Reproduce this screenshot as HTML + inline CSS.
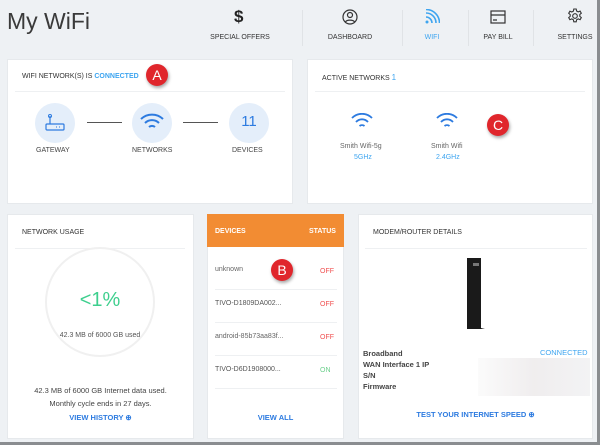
<!DOCTYPE html>
<html><head><style>
*{margin:0;padding:0;box-sizing:border-box}
body{width:600px;height:445px;background:#eef1f4;font-family:"Liberation Sans",sans-serif;position:relative;overflow:hidden;color:#444}
.a{position:absolute}
.card{position:absolute;background:#fff;border:1px solid #e6e9ec}
.t{position:absolute;font-size:7px;white-space:nowrap}
.nav{position:absolute;top:34px;font-size:7px;color:#333;transform:translateX(-50%);white-space:nowrap}
.sep{position:absolute;top:10px;width:1px;height:36px;background:#e0e3e6}
.badge{position:absolute;width:22px;height:22px;border-radius:50%;background:#e0262c;color:#fff;font-size:14px;text-align:center;line-height:22px;box-shadow:1px 2px 3px rgba(0,0,0,.35)}
.circ{position:absolute;width:40px;height:40px;border-radius:50%;background:#e4eefa}
.hr{position:absolute;height:1px;background:#eef0f2}
.blue{color:#2d7be0}
</style></head><body>
<div class="a" style="left:7px;top:8px;font-size:23px;color:#3a3a3a">My WiFi</div>
<div class="a" style="left:234px;top:7px;font-size:17px;font-weight:bold;color:#222">$</div>
<div class="nav" style="left:240px">SPECIAL OFFERS</div>
<div class="sep" style="left:302px"></div>
<svg class="a" style="left:342px;top:9px" width="16" height="16" viewBox="0 0 16 16"><circle cx="8" cy="8" r="7" fill="none" stroke="#333" stroke-width="1.2"/><circle cx="8" cy="6" r="2.5" fill="none" stroke="#333" stroke-width="1.2"/><path d="M3.5 13c1-2.5 8-2.5 9 0" fill="none" stroke="#333" stroke-width="1.2"/></svg>
<div class="nav" style="left:350px">DASHBOARD</div>
<div class="sep" style="left:402px"></div>
<svg class="a" style="left:424px;top:9px" width="16" height="16" viewBox="0 0 16 16"><circle cx="3" cy="13" r="1.5" fill="#3ea5f0"/><path d="M2 8a6 6 0 0 1 6 6M2 4a10 10 0 0 1 10 10M2 0.5a13.5 13.5 0 0 1 13.5 13.5" fill="none" stroke="#3ea5f0" stroke-width="1.6"/></svg>
<div class="nav" style="left:432px;color:#3ea5f0">WIFI</div>
<div class="sep" style="left:468px"></div>
<svg class="a" style="left:490px;top:10px" width="16" height="14" viewBox="0 0 16 14"><rect x="1" y="1" width="14" height="12" fill="none" stroke="#333" stroke-width="1.2"/><path d="M1 5h14M3 10h4" stroke="#333" stroke-width="1.2"/></svg>
<div class="nav" style="left:498px">PAY BILL</div>
<div class="sep" style="left:533px"></div>
<svg class="a" style="left:567px;top:8px" width="16" height="16" viewBox="0 0 16 16"><g fill="none" stroke="#333" stroke-width="1.1"><circle cx="8" cy="8" r="2.3"/><path d="M6.8 1h2.4l.4 2 1.6.9 1.9-.8 1.2 2.1-1.5 1.3v1.8l1.5 1.3-1.2 2.1-1.9-.8-1.6.9-.4 2H6.8l-.4-2-1.6-.9-1.9.8-1.2-2.1 1.5-1.3V6.6L1.7 5.3l1.2-2.1 1.9.8 1.6-.9z"/></g></svg>
<div class="nav" style="left:575px">SETTINGS</div>

<!-- card1 -->
<div class="card" style="left:7px;top:59px;width:286px;height:145px"></div>
<div class="t" style="left:22px;top:73px;color:#333">WIFI NETWORK(S) IS <span style="color:#3ea5f0;font-weight:bold">CONNECTED</span></div>
<div class="hr" style="left:15px;top:91px;width:270px"></div>
<div class="circ" style="left:35px;top:103px"></div>
<svg class="a" style="left:44px;top:112px" width="22" height="22" viewBox="0 0 22 22"><rect x="2" y="12" width="18" height="6" rx="1" fill="none" stroke="#2d7be0" stroke-width="1.2"/><path d="M6 12V4" stroke="#2d7be0" stroke-width="1.2"/><circle cx="6" cy="4" r="1.5" fill="none" stroke="#2d7be0"/><path d="M12 15h1M15 15h1" stroke="#2d7be0"/></svg>
<div class="a" style="left:87px;top:122px;width:35px;height:1px;background:#555"></div>
<div class="circ" style="left:132px;top:103px"></div>
<svg class="a" style="left:139px;top:112px" width="26" height="20" viewBox="0 0 26 20"><path d="M2 7a16 16 0 0 1 22 0M6 11a10 10 0 0 1 14 0M10 15a4.5 4.5 0 0 1 6 0" fill="none" stroke="#2d7be0" stroke-width="2"/></svg>
<div class="a" style="left:183px;top:122px;width:35px;height:1px;background:#555"></div>
<div class="circ" style="left:229px;top:103px"></div>
<div class="a" style="left:229px;top:113px;width:40px;text-align:center;font-size:15px" ><span class="blue">11</span></div>
<div class="t" style="left:36px;top:147px">GATEWAY</div>
<div class="t" style="left:132px;top:147px">NETWORKS</div>
<div class="t" style="left:232px;top:147px">DEVICES</div>
<div class="badge" style="left:146px;top:64px">A</div>

<!-- card2 -->
<div class="card" style="left:307px;top:59px;width:286px;height:145px"></div>
<div class="t" style="left:322px;top:73px;color:#333">ACTIVE NETWORKS <span style="color:#3ea5f0;font-size:8px">1</span></div>
<div class="hr" style="left:315px;top:91px;width:270px"></div>
<svg class="a" style="left:351px;top:113px" width="22" height="16" viewBox="0 0 22 16"><path d="M1 5a14 14 0 0 1 20 0M5 9a8 8 0 0 1 12 0M8.5 13a4 4 0 0 1 5 0" fill="none" stroke="#2d7be0" stroke-width="1.8"/></svg>
<svg class="a" style="left:436px;top:113px" width="22" height="16" viewBox="0 0 22 16"><path d="M1 5a14 14 0 0 1 20 0M5 9a8 8 0 0 1 12 0M8.5 13a4 4 0 0 1 5 0" fill="none" stroke="#2d7be0" stroke-width="1.8"/></svg>
<div class="t" style="left:340px;top:143px;color:#666">Smith Wifi-5g</div>
<div class="t" style="left:354px;top:154px;color:#3ea5f0">5GHz</div>
<div class="t" style="left:431px;top:143px;color:#666">Smith Wifi</div>
<div class="t" style="left:436px;top:154px;color:#3ea5f0">2.4GHz</div>
<div class="badge" style="left:487px;top:114px">C</div>

<!-- card3 -->
<div class="card" style="left:7px;top:214px;width:187px;height:225px"></div>
<div class="t" style="left:22px;top:229px;color:#333">NETWORK USAGE</div>
<div class="hr" style="left:15px;top:248px;width:170px"></div>
<div class="a" style="left:45px;top:247px;width:110px;height:110px;border-radius:50%;border:2px solid #f0f0f0"></div>
<div class="a" style="left:45px;top:289px;width:110px;text-align:center;font-size:20px;color:#3ecf8e">&lt;1%</div>
<div class="a" style="left:45px;top:332px;width:110px;text-align:center;font-size:7px;color:#555">42.3 MB of 6000 GB used</div>
<div class="a" style="left:7px;top:384px;width:187px;text-align:center;font-size:7.5px;color:#444;line-height:13px">42.3 MB of 6000 GB Internet data used.<br>Monthly cycle ends in 27 days.</div>
<div class="a" style="left:7px;top:413px;width:187px;text-align:center;font-size:7.5px;font-weight:bold" ><span class="blue">VIEW HISTORY ⊕</span></div>

<!-- card4 -->
<div class="card" style="left:207px;top:214px;width:137px;height:225px"></div>
<div class="a" style="left:207px;top:214px;width:137px;height:33px;background:#f28c33"></div>
<div class="t" style="left:215px;top:228px;color:#fff;font-weight:bold">DEVICES</div>
<div class="t" style="left:309px;top:228px;color:#fff;font-weight:bold">STATUS</div>
<div class="t" style="left:215px;top:266px;color:#666">unknown</div><div class="t" style="left:320px;top:268px;color:#f05050">OFF</div>
<div class="hr" style="left:215px;top:289px;width:122px"></div>
<div class="t" style="left:215px;top:300px;color:#555">TIVO-D1809DA002...</div><div class="t" style="left:320px;top:301px;color:#f05050">OFF</div>
<div class="hr" style="left:215px;top:322px;width:122px"></div>
<div class="t" style="left:215px;top:333px;color:#666">android-85b73aa83f...</div><div class="t" style="left:320px;top:334px;color:#f05050">OFF</div>
<div class="hr" style="left:215px;top:355px;width:122px"></div>
<div class="t" style="left:215px;top:366px;color:#555">TIVO-D6D1908000...</div><div class="t" style="left:320px;top:367px;color:#6cd08c">ON</div>
<div class="hr" style="left:215px;top:388px;width:122px"></div>
<div class="a" style="left:207px;top:413px;width:137px;text-align:center;font-size:7.5px;font-weight:bold"><span class="blue">VIEW ALL</span></div>
<div class="badge" style="left:271px;top:259px">B</div>

<!-- card5 -->
<div class="card" style="left:358px;top:214px;width:235px;height:225px"></div>
<div class="t" style="left:373px;top:229px;color:#333">MODEM/ROUTER DETAILS</div>
<div class="hr" style="left:365px;top:248px;width:222px"></div>
<svg class="a" style="left:465px;top:257px" width="22" height="75" viewBox="0 0 22 75"><path d="M2 1h14v70l4 1H2z" fill="#1a1a1a"/><rect x="8" y="6" width="6" height="3" fill="#777"/></svg>
<div class="a" style="left:363px;top:348px;font-size:7.5px;font-weight:bold;color:#444;line-height:11px">Broadband<br>WAN Interface 1 IP<br>S/N<br>Firmware</div>
<div class="t" style="left:540px;top:348px;color:#3ea5f0;font-size:7.5px">CONNECTED</div>
<div class="a" style="left:478px;top:358px;width:112px;height:38px;background:linear-gradient(90deg,#fafafa,#ece9ea 50%,#f0f0f2);opacity:.8"></div>
<div class="a" style="left:358px;top:410px;width:235px;text-align:center;font-size:7.5px;font-weight:bold"><span class="blue">TEST YOUR INTERNET SPEED ⊕</span></div>
<div class="a" style="left:597px;top:0;width:3px;height:445px;background:#8a8d90"></div>
<div class="a" style="left:0;top:442px;width:600px;height:3px;background:#8a8d90"></div>
</body></html>
